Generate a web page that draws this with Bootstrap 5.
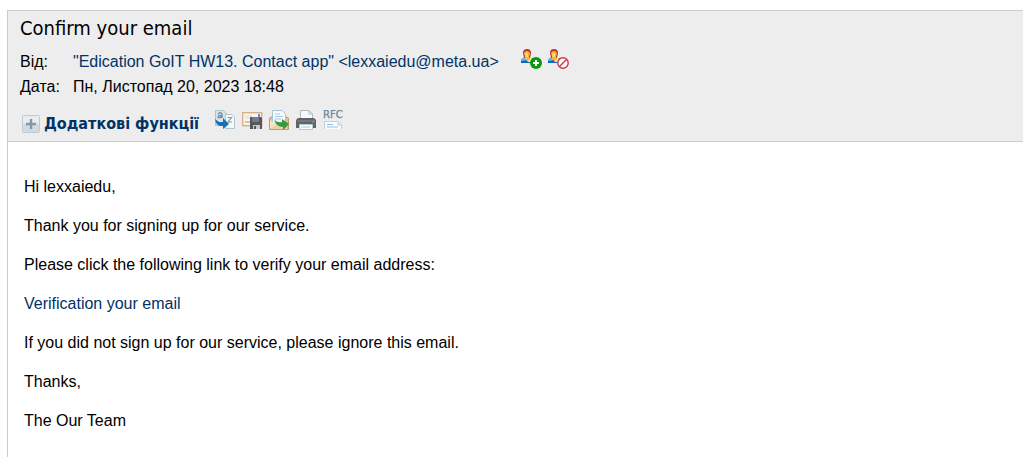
<!DOCTYPE html>
<html lang="uk">
<head>
<meta charset="utf-8">
<meta name="viewport" content="width=device-width, initial-scale=1">
<title>Confirm your email</title>
<link href="https://cdn.jsdelivr.net/npm/bootstrap@5.3.0/dist/css/bootstrap.min.css" rel="stylesheet">
<style>
body { font: 16px/23px "Liberation Sans", Arial, sans-serif; color: #000; background: #fff; }
a { color: #036; text-decoration: none; }
a:hover { text-decoration: underline; }
.message { margin: 10px 0 0 7px; border: 1px solid #ccc; border-width: 1px 0 0 1px; }
.message-head { background: #ededed; border-bottom: 1px solid #ccc; padding: 4px 12px 5px; }
.subject { font: 20px/26px "DejaVu Sans Condensed", Tahoma, sans-serif; margin: 0 0 8px; }
.fields { display: grid; grid-template-columns: 53px 1fr; line-height: 25px; }
.fields dt { font-weight: 400; }
.more { font: bold 16px/25px "DejaVu Sans Condensed", Tahoma, sans-serif; color: #036; gap: 3px; }
.tools { gap: 6px; padding-top: 3px; }
.contact-tools { gap: 6px; margin-left: 22px; }
.icon-btn { line-height: 0; }
.icon-btn svg, .more svg { display: block; }
.message-body { padding: 33px 16px 24px; }
.message-body p { margin: 0 0 16px; }
</style>
</head>
<body>
<svg class="d-none" aria-hidden="true">
  <symbol id="person" viewBox="0 0 21 22">
    <path d="M0 14V12Q0 9 4 9H12Q16 9 16 13V14Z" fill="#1164ba"/>
    <path d="M0 12Q0 9 4 9L6 11Q3 12 0 12Z" fill="#6ab6ee"/>
    <path d="M4 9H11L10 13H7Z" fill="#ffe4a0"/>
    <path d="M2 4Q2 0 6 0T10 4L9 9H3Z" fill="#bd3528"/>
    <path d="M3 4Q4 2 6 2T9 4L8 8 9 10 7 12 4 10V8Z" fill="#ffb238"/>
    <path d="M4 4H7V8H5Z" fill="#ffdc70"/>
  </symbol>
</svg>
<article class="message min-vh-100">
  <header class="message-head">
    <h1 class="subject">Confirm your email</h1>
    <dl class="fields mb-0">
      <dt>Від:</dt>
      <dd class="mb-0 d-flex">
        <a href="#">"Edication GoIT HW13. Contact app" &lt;lexxaiedu@meta.ua&gt;</a>
        <span class="contact-tools d-flex align-items-start">
          <button type="button" class="btn p-0 border-0 icon-btn" aria-label="Додати контакт">
            <svg width="21" height="22" viewBox="0 0 21 22"><use href="#person"/><circle cx="15" cy="14" r="6" fill="#089b0b"/><path d="M15 11V17M12 14H18" stroke="#fff" stroke-width="2"/></svg>
          </button>
          <button type="button" class="btn p-0 border-0 icon-btn" aria-label="Заблокувати">
            <svg width="21" height="22" viewBox="0 0 21 22"><use href="#person"/><circle cx="15" cy="14" r="5.2" fill="#fff" stroke="#d23642" stroke-width="1.4"/><path d="M11.5 17.5 18.5 10.5" stroke="#d23642" stroke-width="1.4"/></svg>
          </button>
        </span>
      </dd>
      <dt>Дата:</dt>
      <dd class="mb-0">Пн, Листопад 20, 2023 18:48</dd>
    </dl>
    <div class="d-flex align-items-start mt-2">
      <button type="button" class="btn p-0 pt-1 border-0 more d-flex align-items-center">
        <svg width="21" height="20" viewBox="0 0 21 20"><rect x="2.5" y="1.5" width="17" height="17" rx="1" fill="#e6ecef" stroke="#bdcbd2"/><path d="M3 10H19V18H3Z" fill="#d0dbe1"/><path d="M11 5V15M6 10H16" stroke="#8599a5" stroke-width="2.4"/></svg>
        Додаткові функції
      </button>
      <div class="tools d-flex ms-3">
        <button type="button" class="btn p-0 border-0 icon-btn" aria-label="Кодування">
          <svg width="21" height="22" viewBox="0 0 21 22"><path d="M.5.5H8L11.5 3.5V15.5H.5Z" fill="#d5e3eb" stroke="#abc3d0"/><path d="M3 4Q7 1 7 5V8M7 5Q3 5 3 7 4 9 7 6" fill="none" stroke="#668696" stroke-width="1.2"/><path d="M10.500 4.500H17L19.500 7V18.500H10.500Z" fill="#f4f9fb" stroke="#b2c5cf"/><path d="M12.500 7.500H16.500L13 12H17" fill="none" stroke="#819aa7" stroke-width="1.2"/><path d="M0 9 4 12H8V8L14 14 8 19V16H5Q1 15 0 9Z" fill="#1672b5"/></svg>
        </button>
        <button type="button" class="btn p-0 border-0 icon-btn" aria-label="Зберегти">
          <svg width="21" height="22" viewBox="0 0 21 22"><rect x=".7" y="2.700" width="19" height="13" fill="#faf5ed" stroke="#d7b08a" stroke-width="1.4"/><path d="M3 6H10M3 8H9" stroke="#ddd9d4"/><path d="M3 12H8" stroke="#a98a7b"/><path d="M8 7H19L20 8V19H8Z" fill="#55575c"/><path d="M10 7H17V12H10Z" fill="#777b82"/><path d="M11 15H18V19H11Z" fill="#c7cbd0"/><path d="M12 16H14V19H12Z" fill="#555"/><path d="M16 4H18V7H16Z" fill="#6c88df"/></svg>
        </button>
        <button type="button" class="btn p-0 border-0 icon-btn" aria-label="Переслати">
          <svg width="21" height="22" viewBox="0 0 21 22"><path d="M.5 8 10 3 19.500 8V19.500H.5Z" fill="#e3bc8f" stroke="#c79a6c"/><path d="M3.500.5H13L16.500 4V14H3.500Z" fill="#f5fbfe" stroke="#a4c6d7"/><path d="M6 4H11M6 6.500H14M6 9H12" stroke="#a7c9dc"/><path d="M1 10 9 15 1 19Z" fill="#f9e2c1"/><path d="M1 19 9 14 19 19Z" fill="#efd0a6"/><path d="M5 9Q8 13 13 12V9L20 14 14 20V17Q7 17 5 9Z" fill="#369b3c"/></svg>
        </button>
        <button type="button" class="btn p-0 border-0 icon-btn" aria-label="Друк">
          <svg width="21" height="22" viewBox="0 0 21 22"><path d="M4.500 10V.5H13L16.500 4V10Z" fill="#f5fafc" stroke="#a9bdc8"/><path d="M13 .5V4H16" fill="none" stroke="#a9bdc8"/><path d="M2 8H18L20 10V18H0V10Z" fill="#606367"/><path d="M1 11H19" stroke="#898c8f"/><path d="M16 12H18" stroke="#77bb71"/><path d="M3.500 14.500H16.500V19.500H3.500Z" fill="#f9fcfd" stroke="#b6c8d2"/><path d="M5 17H14" stroke="#a9ccdf"/></svg>
        </button>
        <button type="button" class="btn p-0 border-0 icon-btn" aria-label="RFC">
          <svg width="21" height="22" viewBox="0 0 21 22"><text x="0" y="8" font-family="DejaVu Sans" font-size="10" fill="#6d8999" stroke="#6d8999" stroke-width=".3">RFC</text><path d="M1.500 19V11.500H15L18.500 15V19" fill="#f8fcfe" stroke="#bfd0d9"/><path d="M15 11.500V15H18" fill="#d9e6ec" stroke="#bfd0d9"/><path d="M4 14.500H10M4 17H15" stroke="#91c1dc"/></svg>
        </button>
      </div>
    </div>
  </header>
  <div class="message-body">
    <p>Hi lexxaiedu,</p>
    <p>Thank you for signing up for our service.</p>
    <p>Please click the following link to verify your email address:</p>
    <p><a href="#">Verification your email</a></p>
    <p>If you did not sign up for our service, please ignore this email.</p>
    <p>Thanks,</p>
    <p class="mb-0">The Our Team</p>
  </div>
</article>
<script src="https://cdn.jsdelivr.net/npm/bootstrap@5.3.0/dist/js/bootstrap.bundle.min.js"></script>
</body>
</html>
